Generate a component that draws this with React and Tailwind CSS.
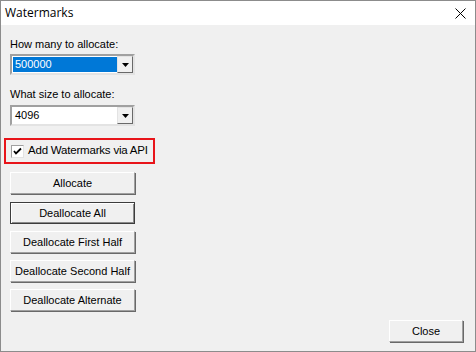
import React from 'react';

const Combo = ({ value, selected }) => (
  <div className="w-[125px] h-[21px] flex bg-white border-2 border-t-[#a0a0a0] border-l-[#a0a0a0] border-r-[#e3e3e3] border-b-[#e3e3e3]">
    <div className="flex-1 flex items-center pl-[1px] py-[1px]">
      <span className={`h-full flex-1 flex items-center pl-[2px] ${selected ? 'bg-[#0078d7] text-white' : 'text-black'}`}>
        {value}
      </span>
    </div>
    <div className="w-[16px] h-full bg-[#f0f0f0] border border-t-[#e3e3e3] border-l-[#e3e3e3] border-r-[#696969] border-b-[#696969] flex items-center justify-center">
      <svg width="7" height="4" viewBox="0 0 7 4"><path d="M0 0h7L3.5 4z" fill="#000" /></svg>
    </div>
  </div>
);

const Btn = ({ children, def, w = 'w-[125px]' }) => (
  <div className={`${w} h-[22px] flex items-center justify-center whitespace-nowrap bg-[#f0f0f0] text-black ${def ? 'border border-[#3c3c3c] shadow-[inset_1px_1px_0_#fff,inset_-1px_-1px_0_#8a8a8a]' : 'border border-t-white border-l-white border-r-[#a0a0a0] border-b-[#a0a0a0] shadow-[1px_1px_0_#696969]'}`}>
    {children}
  </div>
);

export default function App() {
  return (
    <div className="w-[476px] h-[352px] flex flex-col bg-[#f0f0f0] border border-[#8c8c8c] font-['Liberation_Sans',Arial,sans-serif] text-[11px] text-black">
      <div className="h-[24px] bg-white flex items-center justify-between pl-[4px] pr-[9px]">
        <span className="font-['Open_Sans','Liberation_Sans',sans-serif] text-[12px]">Watermarks</span>
        <svg width="11" height="11" viewBox="0 0 11 11"><path d="M0.5 0.5l10 10M10.5 0.5l-10 10" stroke="#000" strokeWidth="1" /></svg>
      </div>
      <div className="flex-1 flex flex-col pl-[9px] pr-[12px] pb-[9px]">
        <div className="mt-[12px] h-[14px] leading-[14px] whitespace-nowrap">How many to allocate:</div>
        <div className="mt-[3px]"><Combo value="500000" selected /></div>
        <div className="mt-[12px] h-[14px] leading-[14px] whitespace-nowrap">What size to allocate:</div>
        <div className="mt-[4px]"><Combo value="4096" /></div>
        <div className="mt-[12px] -ml-[6px] w-[151px] h-[26px] border-2 border-[#e8141a] flex items-center pl-[5px] gap-[4px] whitespace-nowrap">
          <div className="w-[13px] h-[13px] shrink-0 bg-white border border-t-[#a0a0a0] border-l-[#a0a0a0] border-r-[#e3e3e3] border-b-[#e3e3e3] flex items-center justify-center">
            <svg width="9" height="9" viewBox="0 0 9 9"><path d="M1 4l2 2.5L8 1.5" stroke="#000" strokeWidth="1.8" fill="none" /></svg>
          </div>
          <span className="text-[11.5px] tracking-[-0.2px]">Add Watermarks via API</span>
        </div>
        <div className="mt-[8px] flex flex-col gap-[7px]">
          <Btn>Allocate</Btn>
          <div className="mt-[1px]"><Btn def>Deallocate All</Btn></div>
          <Btn>Deallocate First Half</Btn>
          <Btn>Deallocate Second Half</Btn>
          <Btn>Deallocate Alternate</Btn>
        </div>
        <div className="mt-auto flex justify-end">
          <Btn w="w-[74px]">Close</Btn>
        </div>
      </div>
    </div>
  );
}
